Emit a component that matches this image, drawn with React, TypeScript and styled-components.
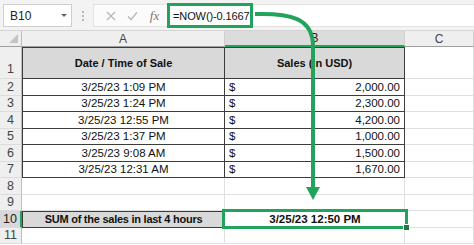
import * as React from "react";
import styled, { createGlobalStyle } from "styled-components";

const GlobalStyle = createGlobalStyle`
  html, body {
    margin: 0;
    padding: 0;
    background: #ffffff;
  }
  body {
    font-family: "Liberation Sans", Arial, sans-serif;
    width: 474px;
    height: 245px;
    overflow: hidden;
  }
`;

const GREEN = "#21a35b";
const DARK = "#3c3c3c";
const GRID = "#e0e0e0";

const Window = styled.div`
  position: relative;
  width: 474px;
  height: 245px;
  overflow: hidden;
`;

const FormulaBar = styled.div`
  display: flex;
  align-items: stretch;
  height: 31px;
  padding: 4px 0 3px 3px;
  box-sizing: border-box;
  background: #f3f3f3;
  border-bottom: 1px solid #d4d4d4;
`;

const NameBox = styled.div`
  width: 69px;
  box-sizing: border-box;
  display: flex;
  align-items: center;
  justify-content: space-between;
  padding: 0 4px 0 6px;
  background: #fff;
  border: 1px solid #cfcfcf;
  font-size: 12px;
  color: #222;
`;

const Caret = styled.span`
  width: 0;
  height: 0;
  border-left: 3px solid transparent;
  border-right: 3px solid transparent;
  border-top: 3px solid #666;
`;

const Dots = styled.div`
  width: 21px;
  display: flex;
  flex-direction: column;
  align-items: center;
  justify-content: center;
  gap: 2px;
  & > span {
    width: 2px;
    height: 2px;
    background: #b8b8b8;
  }
`;

const Buttons = styled.div`
  width: 74px;
  box-sizing: border-box;
  display: flex;
  align-items: center;
  justify-content: space-around;
  padding: 0 2px 0 6px;
  background: #fbfbfb;
  border: 1px solid #e2e2e2;
  border-right: none;
  color: #b0b0b0;
`;

const Fx = styled.span`
  font-family: "Liberation Serif", serif;
  font-style: italic;
  font-size: 13px;
  color: #777;
`;

const Input = styled.div`
  flex: 1;
  display: flex;
  align-items: stretch;
  background: #fff;
  border-top: 1px solid #e2e2e2;
  border-bottom: 1px solid #e2e2e2;
`;

const FormulaText = styled.div`
  display: flex;
  align-items: center;
  width: 86px;
  box-sizing: border-box;
  padding: 0 0 0 3px;
  margin: -2px 0;
  border: 3px solid ${GREEN};
  font-size: 11px;
  letter-spacing: -0.1px;
  color: #111;
  white-space: nowrap;
`;

const Sheet = styled.div`
  display: grid;
  grid-template-columns: 22px 203px 180px 69px;
  grid-template-rows: 16px 32px repeat(10, 16.5px);
`;

const ColHead = styled.div<{ $active?: boolean }>`
  display: flex;
  align-items: center;
  justify-content: center;
  font-size: 12px;
  color: ${(p) => (p.$active ? "#222" : "#444")};
  background: ${(p) => (p.$active ? "#dcdcdc" : "#efefef")};
  border-right: 1px solid #cfcfcf;
  border-bottom: ${(p) => (p.$active ? `2px solid ${GREEN}` : "1px solid #9e9e9e")};
  box-sizing: border-box;
`;

const Corner = styled.div`
  position: relative;
  background: #efefef;
  border-right: 1px solid #bdbdbd;
  border-bottom: 1px solid #9e9e9e;
  box-sizing: border-box;
  &::after {
    content: "";
    position: absolute;
    right: 3px;
    bottom: 3px;
    width: 0;
    height: 0;
    border-left: 9px solid transparent;
    border-bottom: 9px solid #c4c4c4;
  }
`;

const RowHead = styled.div<{ $active?: boolean; $bottom?: boolean }>`
  display: flex;
  justify-content: center;
  align-items: ${(p) => (p.$bottom ? "flex-end" : "center")};
  padding-bottom: ${(p) => (p.$bottom ? "2px" : "0")};
  font-size: 12.5px;
  color: ${(p) => (p.$active ? "#222" : "#444")};
  background: ${(p) => (p.$active ? "#d8d8d8" : "#efefef")};
  border-right: ${(p) => (p.$active ? `2px solid ${GREEN}` : "1px solid #bdbdbd")};
  border-bottom: 1px solid #dcdcdc;
  box-sizing: border-box;
`;

type CellKind = "plain" | "head" | "data" | "label";

const Cell = styled.div<{ $kind?: CellKind; $first?: boolean; $top?: boolean }>`
  display: flex;
  align-items: center;
  justify-content: center;
  box-sizing: border-box;
  font-size: ${(p) => (p.$kind === "head" || p.$kind === "label" ? "11px" : "11.5px")};
  letter-spacing: ${(p) => (p.$kind === "label" ? "-0.25px" : "0")};
  color: #111;
  white-space: nowrap;
  font-weight: ${(p) => (p.$kind === "head" || p.$kind === "label" ? 700 : 400)};
  background: ${(p) => (p.$kind === "head" || p.$kind === "label" ? "#d9d9d9" : "#fff")};
  border-right: 1px solid ${(p) => (p.$kind && p.$kind !== "plain" ? DARK : GRID)};
  border-bottom: 1px solid ${(p) => (p.$kind && p.$kind !== "plain" ? DARK : GRID)};
  border-left: ${(p) => (p.$first ? `1px solid ${DARK}` : "none")};
  border-top: ${(p) => (p.$top ? `1px solid ${DARK}` : "none")};
`;

const Money = styled(Cell)`
  justify-content: space-between;
  padding: 0 4px 0 4px;
`;

const Selected = styled.div`
  position: relative;
  z-index: 1;
  display: flex;
  align-items: center;
  justify-content: center;
  margin: -2px -3px -1px -3px;
  border: 3px solid ${GREEN};
  background: #fff;
  font-size: 11.5px;
  font-weight: 700;
  color: #111;
  &::after {
    content: "";
    position: absolute;
    right: -5px;
    bottom: -5px;
    width: 5px;
    height: 5px;
    background: #1d7a45;
    border: 1px solid #fff;
  }
`;

const Arrow = styled.svg`
  position: absolute;
  left: 0;
  top: 0;
  z-index: 2;
  pointer-events: none;
`;

const rows = [
  { date: "3/25/23 1:09 PM", amount: "2,000.00" },
  { date: "3/25/23 1:24 PM", amount: "2,300.00" },
  { date: "3/25/23 12:55 PM", amount: "4,200.00" },
  { date: "3/25/23 1:37 PM", amount: "1,000.00" },
  { date: "3/25/23 9:08 AM", amount: "1,500.00" },
  { date: "3/25/23 12:31 AM", amount: "1,670.00" },
];

export default function App() {
  return (
    <Window>
      <GlobalStyle />
      <FormulaBar>
        <NameBox>
          B10
          <Caret />
        </NameBox>
        <Dots>
          <span />
          <span />
          <span />
        </Dots>
        <Buttons>
          <svg width="10" height="10" viewBox="0 0 10 10">
            <path d="M1 1 L9 9 M9 1 L1 9" stroke="#b5b5b5" strokeWidth="1.2" />
          </svg>
          <svg width="11" height="10" viewBox="0 0 11 10">
            <path d="M1 5.5 L4 8.5 L10 1.5" stroke="#b5b5b5" strokeWidth="1.2" fill="none" />
          </svg>
          <Fx>fx</Fx>
        </Buttons>
        <Input>
          <FormulaText>=NOW()-0.1667</FormulaText>
        </Input>
      </FormulaBar>

      <Sheet>
        <Corner />
        <ColHead>A</ColHead>
        <ColHead $active>B</ColHead>
        <ColHead>C</ColHead>

        <RowHead $bottom>1</RowHead>
        <Cell $kind="head" $first $top>Date / Time of Sale</Cell>
        <Cell $kind="head" $top>Sales (in USD)</Cell>
        <Cell />

        {rows.map((r, i) => (
          <React.Fragment key={r.date}>
            <RowHead>{i + 2}</RowHead>
            <Cell $kind="data" $first>{r.date}</Cell>
            <Money $kind="data">
              <span>$</span>
              <span>{r.amount}</span>
            </Money>
            <Cell />
          </React.Fragment>
        ))}

        {[8, 9].map((n) => (
          <React.Fragment key={n}>
            <RowHead>{n}</RowHead>
            <Cell />
            <Cell />
            <Cell />
          </React.Fragment>
        ))}

        <RowHead $active>10</RowHead>
        <Cell $kind="label" $first $top>SUM of the sales in last 4 hours</Cell>
        <Selected>3/25/23 12:50 PM</Selected>
        <Cell />

        <RowHead>11</RowHead>
        <Cell />
        <Cell />
        <Cell />
      </Sheet>

      <Arrow width="474" height="245" viewBox="0 0 474 245">
        <path
          d="M255 14 C 290 13, 313 18, 313 46 L 313 189"
          stroke={GREEN}
          strokeWidth="4"
          fill="none"
        />
        <polygon points="306,187 320,187 313,200" fill={GREEN} />
      </Arrow>
    </Window>
  );
}
